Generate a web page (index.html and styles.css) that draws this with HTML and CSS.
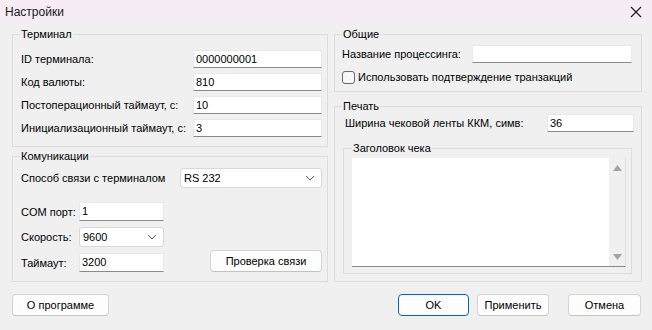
FILE: index.html
```html
<!DOCTYPE html>
<html lang="ru">
  <head>
    <meta charset="UTF-8" />
    <title>Настройки</title>
    <link rel="stylesheet" href="styles.css">
  </head>
  <body>
    <div class="window">
      <div class="titlebar">
        <span class="title">Настройки</span>
        <svg class="close" width="12" height="12" viewBox="0 0 12 12">
          <path d="M1 1 L11 11 M11 1 L1 11" stroke="#1a1a1a" stroke-width="1.1" fill="none" />
        </svg>
      </div>

      <div class="content">
        <div class="col">
          <fieldset class="group terminal">
            <legend>Терминал</legend>
            <div class="form">
              <label>ID терминала:</label>
              <div class="edit">0000000001</div>
              <label>Код валюты:</label>
              <div class="edit">810</div>
              <label>Постоперационный таймаут, с:</label>
              <div class="edit">10</div>
              <label>Инициализационный таймаут, с:</label>
              <div class="edit">3</div>
            </div>
          </fieldset>

          <fieldset class="group comm">
            <legend>Комуникации</legend>
            <div class="row">
              <label>Способ связи с терминалом</label>
              <div class="combo wide">
                <span>RS 232</span>
                <svg width="10" height="6" viewBox="0 0 10 6"><path d="M1 1 L5 5 L9 1" stroke="#606060" fill="none" /></svg>
              </div>
            </div>
            <div class="port">
              <div class="port-form">
                <label>COM порт:</label>
                <div class="edit">1</div>
                <label>Скорость:</label>
                <div class="combo">
                  <span>9600</span>
                  <svg width="10" height="6" viewBox="0 0 10 6"><path d="M1 1 L5 5 L9 1" stroke="#606060" fill="none" /></svg>
                </div>
                <label>Таймаут:</label>
                <div class="edit">3200</div>
              </div>
              <button class="btn check">Проверка связи</button>
            </div>
          </fieldset>
        </div>

        <div class="col">
          <fieldset class="group general">
            <legend>Общие</legend>
            <div class="row">
              <label>Название процессинга:</label>
              <div class="edit processing"></div>
            </div>
            <label class="check-row"><input type="checkbox" /> Использовать подтверждение транзакций</label>
          </fieldset>

          <fieldset class="group print">
            <legend>Печать</legend>
            <div class="row tape">
              <label>Ширина чековой ленты ККМ, симв:</label>
              <div class="edit">36</div>
            </div>
            <fieldset class="group header">
              <legend>Заголовок чека</legend>
              <div class="memo">
                <div class="memo-text"></div>
                <div class="scroll">
                  <svg width="9" height="6" viewBox="0 0 9 6"><path d="M4.5 0 L9 6 L0 6 Z" fill="#a3a3a3" /></svg>
                  <svg width="9" height="6" viewBox="0 0 9 6"><path d="M0 0 L9 0 L4.5 6 Z" fill="#a3a3a3" /></svg>
                </div>
              </div>
            </fieldset>
          </fieldset>
        </div>
      </div>

      <div class="footer">
        <button class="btn about">О программе</button>
        <button class="btn ok">OK</button>
        <button class="btn apply">Применить</button>
        <button class="btn cancel">Отмена</button>
      </div>
    </div>
  </body>
</html>
```

FILE: styles.css
```css
body {
  margin: 0;
  font-family: "Liberation Sans", Arial, sans-serif;
  font-size: 11px;
  color: #000;
  background: #f0f0f0;
}
.window {
  width: 652px;
  height: 330px;
  background: #f0f0f0;
}
.titlebar {
  height: 23px;
  background: #f5ecf5;
  display: flex;
  align-items: center;
  justify-content: space-between;
  padding: 0 10px 0 5px;
}
.title {
  font-size: 12px;
  color: #1a1a1a;
}
.close {
  margin-top: 1px;
}
.content {
  display: grid;
  grid-template-columns: 316px 308px;
  column-gap: 6px;
  padding: 4px 0 0 12px;
}
.group {
  margin: 0;
  border: 1px solid #dcdcdc;
  min-width: 0;
}
.group legend {
  padding: 0 1px;
  line-height: 14px;
}
label {
  line-height: 14px;
  white-space: nowrap;
}
.edit {
  background: #fff;
  border: 1px solid #e8e8e8;
  border-bottom-color: #8a8a8a;
  height: 18px;
  box-sizing: border-box;
  padding: 1px 2px 0;
  line-height: 15px;
}
.combo {
  background: #fff;
  border: 1px solid #d8d8d8;
  border-radius: 3px;
  height: 20px;
  box-sizing: border-box;
  display: flex;
  align-items: center;
  justify-content: space-between;
  padding: 0 6px 0 3px;
}
.btn {
  font: inherit;
  color: #000;
  background: #fdfdfd;
  border: 1px solid #d4d4d4;
  border-bottom-color: #c2c2c2;
  border-radius: 4px;
  height: 22px;
  padding: 0;
}

/* Терминал */
.terminal {
  padding: 9px 5px 9px 7px;
}
.terminal .form {
  display: grid;
  grid-template-columns: 1fr 129px;
  grid-auto-rows: 18px;
  row-gap: 5px;
  align-items: center;
}
.terminal label,
.comm label {
  padding-left: 1px;
}

/* Комуникации */
.comm {
  margin-top: 2px;
  padding: 5px 5px 9px 7px;
}
.comm .row {
  display: flex;
  justify-content: space-between;
  align-items: center;
  margin-bottom: 14px;
}
.combo.wide {
  width: 142px;
}
.port {
  display: flex;
  justify-content: space-between;
  align-items: flex-end;
}
.port-form {
  display: grid;
  grid-template-columns: 59px 85px;
  grid-template-rows: 19px 20px 19px;
  row-gap: 6px;
  align-items: center;
}
.port-form .edit {
  height: 19px;
}
.check {
  width: 112px;
}

/* Общие */
.general {
  padding: 4px 9px 7px 7px;
}
.general .row {
  display: flex;
  justify-content: space-between;
  align-items: center;
}
.processing {
  width: 160px;
}
.check-row {
  display: flex;
  align-items: center;
  margin-top: 7px;
  height: 14px;
}
.check-row input {
  appearance: none;
  width: 13px;
  height: 13px;
  margin: 0 3px 0 0;
  border: 1px solid #6a6a6a;
  border-radius: 3px;
  background: #f7f7f7;
}

/* Печать */
.print {
  margin-top: 7px;
  padding: 1px 7px 7px 7px;
}
.tape {
  display: flex;
  justify-content: space-between;
  align-items: center;
  padding-left: 3px;
}
.tape .edit {
  width: 87px;
}
.header {
  margin: 9px 2px 0 1px;
  padding: 3px 5px 6px 8px;
}
.memo {
  display: flex;
  height: 109px;
  background: #fff;
  border-right: 1px solid #e0e0e0;
  border-bottom: 1px solid #8a8a8a;
  box-sizing: border-box;
}
.memo-text {
  flex: 1;
}
.scroll {
  width: 16px;
  background: #f0f0f0;
  display: flex;
  flex-direction: column;
  justify-content: space-between;
  align-items: center;
  padding: 7px 0 6px;
}

/* кнопки */
.footer {
  display: flex;
  align-items: center;
  margin-top: 12px;
  padding: 0 11px 0 12px;
}
.about {
  width: 97px;
  margin-right: auto;
}
.ok {
  width: 71px;
  border-color: #0067c0;
}
.apply {
  width: 72px;
  margin-left: 8px;
}
.cancel {
  width: 73px;
  margin-left: 19px;
}
```
